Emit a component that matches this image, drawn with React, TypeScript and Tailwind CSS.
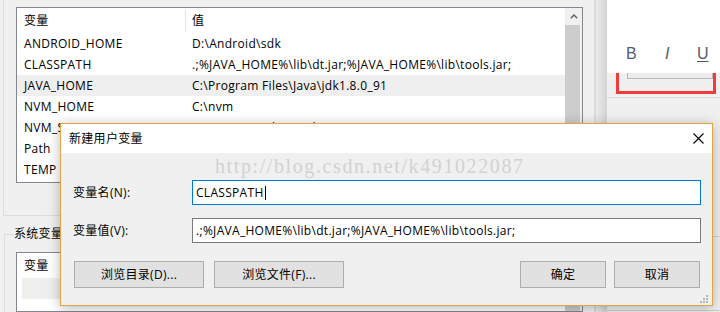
import React from "react";

const rows: [string, string][] = [
  ["ANDROID_HOME", "D:\\Android\\sdk"],
  ["CLASSPATH", ".;%JAVA_HOME%\\lib\\dt.jar;%JAVA_HOME%\\lib\\tools.jar;"],
  ["JAVA_HOME", "C:\\Program Files\\Java\\jdk1.8.0_91"],
  ["NVM_HOME", "C:\\nvm"],
  ["NVM_SYMLINK", "C:\\Program Files\\nodejs"],
  ["Path", "%USERPROFILE%\\AppData\\Roaming\\npm"],
  ["TEMP", "%USERPROFILE%\\AppData\\Local\\Temp"],
];

function Chevron() {
  return (
    <svg width="8" height="5" viewBox="0 0 8 5">
      <path d="M0.8 4.3 L4 1.1 L7.2 4.3" fill="none" stroke="#606060" strokeWidth="1.4" />
    </svg>
  );
}

function ScrollBar() {
  return (
    <div className="w-[17px] flex flex-col bg-[#f0f0f0]">
      <div className="h-[17px] flex items-center justify-center">
        <Chevron />
      </div>
      <div className="flex-1 ml-0 mr-[2px] bg-[#cdcdcd]" />
    </div>
  );
}

export default function App() {
  return (
    <div className="relative w-[720px] h-[312px] overflow-hidden bg-[#f0f0f0] font-['Open_Sans','Noto_Sans_CJK_SC',sans-serif] text-[12px] tracking-[0.3px] text-black">
      <div className="flex h-full">
        {/* background window: environment variables */}
        <div className="w-[595px] h-full flex flex-col pl-[3px]">
          <div className="h-[246px] -mt-[1px] border-l border-r border-b border-[#dcdcdc] pl-[12px] pt-[8px]">
            <div className="w-[567px] h-[176px] border border-[#828790] bg-white flex">
              <div className="flex-1 flex flex-col">
                <div className="h-[25px] flex">
                  <div className="w-[168px] pl-[7px] flex items-center">变量</div>
                  <div className="flex-1 flex items-center">
                    <div className="h-[23px] w-px bg-[#e5e5e5]" />
                    <span className="pl-[6px]">值</span>
                  </div>
                </div>
                {rows.map(([n, v]) => (
                  <div
                    key={n}
                    className={
                      "h-[21px] flex items-center whitespace-nowrap overflow-hidden " +
                      (n === "JAVA_HOME" ? "bg-[#efefef]" : "")
                    }
                  >
                    <div className="w-[168px] pl-[7px] shrink-0">{n}</div>
                    <div className="pl-[7px]">{v}</div>
                  </div>
                ))}
              </div>
              <ScrollBar />
            </div>
          </div>
          <div className="relative mt-[18px] ml-[1px] flex-1 border-l border-t border-r border-[#dcdcdc] pl-[11px] pt-[17px]">
            <span className="absolute -top-[10px] left-[9px] bg-[#f0f0f0]">系统变量</span>
            <div className="w-[567px] h-[60px] border border-[#828790] bg-white flex">
              <div className="flex-1 flex flex-col">
                <div className="h-[25px] flex items-center pl-[7px]">变量</div>
                <div className="h-[21px] ml-[5px] bg-[#efefef]" />
              </div>
              <ScrollBar />
            </div>
          </div>
        </div>
        <div className="w-px h-full bg-[#d9d9d9]" />
        <div className="w-[11px] h-full bg-linear-to-r from-[#ececec] to-[#d3d3d3]" />
        {/* right window */}
        <div className="flex-1 flex flex-col">
          <div className="h-[73px] bg-white flex items-start pt-[46px] pl-[19px] font-['Liberation_Sans',sans-serif] text-[16px] leading-[16px] tracking-normal text-[#545c6a]">
            <span className="w-[39px]">B</span>
            <span className="w-[32px] italic">I</span>
            <span className="underline underline-offset-[2px]">U</span>
          </div>
          <div className="ml-[9px] w-[100px] h-[21px] border-x-[3px] border-b-[3px] border-[#f23c3c]">
            <div className="ml-[8px] h-[6px] border-x border-b border-[#b8b8b8] bg-[#ececec]" />
          </div>
          <div className="mt-[3px] h-px bg-[#dcdcdc]" />
          <div className="mt-[138px] h-px bg-[#cfcfcf]" />
          <div className="mt-[73px] h-px bg-[#cfcfcf]" />
        </div>
      </div>

      {/* dialog */}
      <div className="absolute left-[60px] top-[123px] w-[653px] h-[183px] border border-[#e3a447] bg-[#f0f0f0] shadow-[0_2px_12px_rgba(0,0,0,0.28)] flex flex-col">
        <div className="h-[29px] bg-white flex items-center justify-between pl-[8px] pr-[8px]">
          <span>新建用户变量</span>
          <svg width="11" height="11" viewBox="0 0 11 11">
            <path d="M0.5 0.5 L10.5 10.5 M10.5 0.5 L0.5 10.5" stroke="#000" strokeWidth="1.1" />
          </svg>
        </div>
        <div className="relative flex-1 flex flex-col pl-[12px] pr-[11px] pt-[27px]">
          <div className="absolute left-[154px] top-[3px] whitespace-nowrap font-['Liberation_Serif',serif] text-[20px] leading-[20px] tracking-[1.6px] text-[#d2d2d2]">
            http://blog.csdn.net/k491022087
          </div>
          <div className="flex items-center h-[25px]">
            <div className="w-[119px]">变量名(N):</div>
            <div className="flex-1 h-[25px] border border-[#0078d7] bg-white flex items-center pl-[3px]">
              <span>CLASSPATH</span>
              <span className="ml-px w-px h-[14px] bg-black" />
            </div>
          </div>
          <div className="flex items-center h-[25px] mt-[13px]">
            <div className="w-[119px]">变量值(V):</div>
            <div className="flex-1 h-[25px] border border-[#7a7a7a] bg-white flex items-center pl-[3px] whitespace-nowrap">
              .;%JAVA_HOME%\lib\dt.jar;%JAVA_HOME%\lib\tools.jar;
            </div>
          </div>
          <div className="flex justify-between mt-[18px] ml-px mr-px">
            <div className="flex gap-[10px]">
              <div className="w-[130px] h-[27px] border border-[#adadad] bg-[#e1e1e1] flex items-center justify-center">
                浏览目录(D)...
              </div>
              <div className="w-[130px] h-[27px] border border-[#adadad] bg-[#e1e1e1] flex items-center justify-center">
                浏览文件(F)...
              </div>
            </div>
            <div className="flex gap-[8px]">
              <div className="w-[86px] h-[27px] border border-[#adadad] bg-[#e1e1e1] flex items-center justify-center">
                确定
              </div>
              <div className="w-[86px] h-[27px] border border-[#adadad] bg-[#e1e1e1] flex items-center justify-center">
                取消
              </div>
            </div>
          </div>
          <svg className="absolute right-[3px] bottom-[1px]" width="9" height="9" viewBox="0 0 9 9">
            <rect x="6" y="0" width="2" height="2" fill="#b5b5b5" />
            <rect x="3" y="3" width="2" height="2" fill="#b5b5b5" />
            <rect x="6" y="3" width="2" height="2" fill="#b5b5b5" />
            <rect x="0" y="6" width="2" height="2" fill="#b5b5b5" />
            <rect x="3" y="6" width="2" height="2" fill="#b5b5b5" />
            <rect x="6" y="6" width="2" height="2" fill="#b5b5b5" />
          </svg>
        </div>
      </div>
    </div>
  );
}
